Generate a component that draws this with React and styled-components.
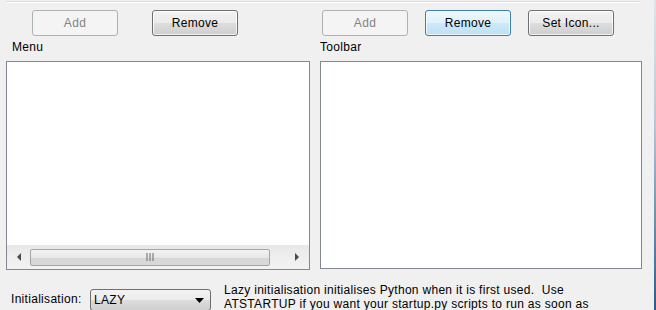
import React from "react";
import styled, { createGlobalStyle } from "styled-components";

const GlobalStyle = createGlobalStyle`
  html, body {
    margin: 0;
    padding: 0;
    background: #f0f0f0;
  }
  body {
    font-family: "Liberation Sans", Arial, sans-serif;
    font-size: 12px;
    letter-spacing: 0.3px;
    color: #000;
  }
`;

const App = () => {
  return (
    <Page>
      <GlobalStyle />
      <TopRule />
      <Columns>
        <Column>
          <ButtonRow indent="26px" gap="34px">
            <Button disabled>Add</Button>
            <Button>Remove</Button>
          </ButtonRow>
          <Label indent="6px">Menu</Label>
          <ListBox height="209px">
            <ListBody />
            <ScrollTrack>
              <ArrowCell>
                <svg width="5" height="8" viewBox="0 0 5 8">
                  <path d="M4 0 L0 4 L4 8 Z" fill="#4a4a4a" />
                </svg>
              </ArrowCell>
              <Thumb>
                <svg width="9" height="8" viewBox="0 0 9 8">
                  <path d="M1 0 V8 M4 0 V8 M7 0 V8" stroke="#6b6b6b" strokeWidth="1" />
                </svg>
              </Thumb>
              <TrackRest>
                <svg width="5" height="8" viewBox="0 0 5 8">
                  <path d="M0 0 L4 4 L0 8 Z" fill="#4a4a4a" />
                </svg>
              </TrackRest>
            </ScrollTrack>
          </ListBox>
        </Column>
        <Column>
          <ButtonRow indent="2px" gap="17px">
            <Button disabled>Add</Button>
            <Button focused>Remove</Button>
            <Button>Set Icon...</Button>
          </ButtonRow>
          <Label indent="0px">Toolbar</Label>
          <ListBox height="208px">
            <ListBody />
          </ListBox>
        </Column>
      </Columns>
      <BottomRow>
        <FieldLabel>Initialisation:</FieldLabel>
        <Select>
          <span>LAZY</span>
          <svg width="9" height="5" viewBox="0 0 9 5">
            <path d="M0 0 H9 L4.5 5 Z" fill="#000" />
          </svg>
        </Select>
        <Description>
          Lazy initialisation initialises Python when it is first used.&nbsp; Use
          <br />
          ATSTARTUP if you want your startup.py scripts to run as soon as
        </Description>
      </BottomRow>
    </Page>
  );
};

export default App;

const Page = styled.div`
  width: 654px;
  height: 310px;
  overflow: hidden;
  border-right: 2px solid;
  border-image: linear-gradient(#dfe5ea, #b8c6d4 40%, #2d5886) 1;
`;

const TopRule = styled.div`
  margin: 1px 14px 0 6px;
  height: 0;
  border-top: 1px solid #d5dfe5;
  border-bottom: 1px solid #ffffff;
  border-radius: 0 0 3px 3px;
`;

const Columns = styled.div`
  display: grid;
  grid-template-columns: 304px 322px;
  column-gap: 10px;
  padding-left: 6px;
  margin-top: 7px;
`;

const Column = styled.div`
  display: flex;
  flex-direction: column;
`;

const ButtonRow = styled.div`
  display: flex;
  gap: ${({ gap }) => gap};
  padding-left: ${({ indent }) => indent};
`;

const Button = styled.button`
  width: 86px;
  height: 26px;
  padding: 0;
  font-family: "Liberation Sans", Arial, sans-serif;
  font-size: 12px;
  letter-spacing: 0.3px;
  border-radius: 3px;
  color: #000;
  border: 1px solid #707070;
  background: linear-gradient(#f2f2f2 0%, #ebebeb 50%, #dddddd 51%, #cfcfcf 100%);
  box-shadow: inset 0 0 0 1px rgba(255, 255, 255, 0.75);

  ${({ focused }) =>
    focused &&
    `
    border-color: #3c7fb1;
    background: linear-gradient(#edf7fd 0%, #dff1fb 50%, #cce9f8 51%, #bde1f4 100%);
    box-shadow: inset 0 0 0 1px rgba(255, 255, 255, 0.7);
  `}

  &:disabled {
    color: #838383;
    border-color: #adb2b5;
    background: #f4f4f4;
    box-shadow: none;
  }
`;

const Label = styled.div`
  margin-top: 4px;
  height: 14px;
  line-height: 14px;
  padding-left: ${({ indent }) => indent};
`;

const ListBox = styled.div`
  margin-top: 7px;
  height: ${({ height }) => height};
  box-sizing: border-box;
  border: 1px solid #828790;
  background: #ffffff;
  display: flex;
  flex-direction: column;
`;

const ListBody = styled.div`
  flex: 1;
`;

const ScrollTrack = styled.div`
  height: 24px;
  display: flex;
  align-items: center;
  background: linear-gradient(#e8e8e8, #f3f3f3);
`;

const ArrowCell = styled.div`
  width: 23px;
  display: flex;
  justify-content: center;
  padding-left: 1px;
  box-sizing: border-box;
`;

const Thumb = styled.div`
  width: 240px;
  height: 17px;
  box-sizing: border-box;
  border: 1px solid #a5a5a5;
  border-radius: 2px;
  background: linear-gradient(#f3f3f3 0%, #e8e8e8 50%, #d6d6d6 51%, #d9d9d9 100%);
  display: flex;
  align-items: center;
  justify-content: center;
`;

const TrackRest = styled.div`
  flex: 1;
  display: flex;
  justify-content: flex-end;
  padding-right: 9px;
`;

const BottomRow = styled.div`
  display: flex;
  align-items: flex-start;
  padding-left: 11px;
  margin-top: 13px;
`;

const FieldLabel = styled.div`
  width: 79px;
  margin-top: 9px;
  line-height: 14px;
`;

const Select = styled.div`
  margin-top: 6px;
  width: 121px;
  height: 22px;
  box-sizing: border-box;
  border: 1px solid #707070;
  border-radius: 3px;
  background: linear-gradient(#f2f2f2 0%, #ebebeb 50%, #dddddd 51%, #cfcfcf 100%);
  display: flex;
  align-items: center;
  justify-content: space-between;
  padding: 0 6px 0 3px;
`;

const Description = styled.div`
  margin-left: 13px;
  line-height: 14px;
  white-space: nowrap;
`;
